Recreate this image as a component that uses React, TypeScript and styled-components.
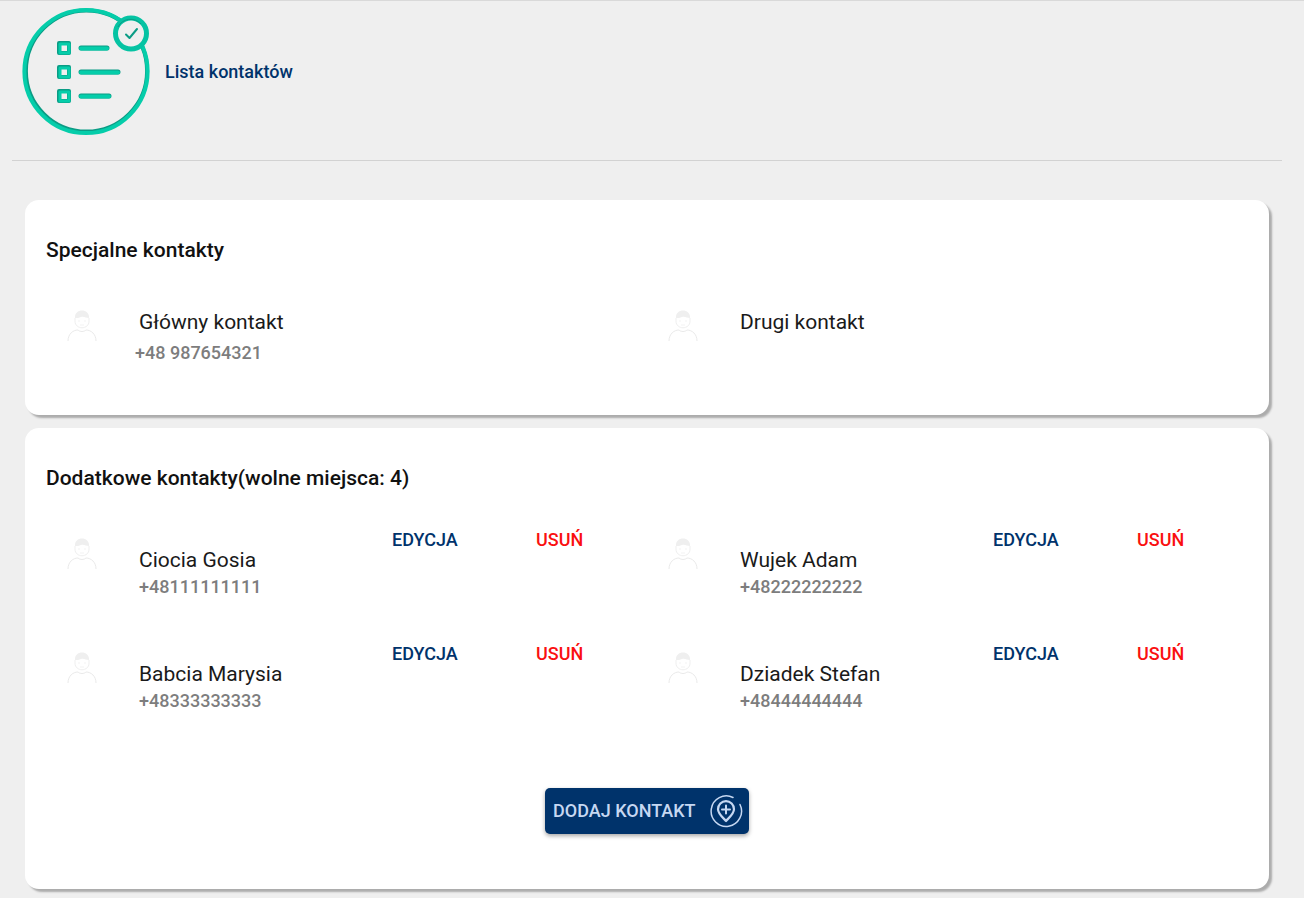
import React from "react";
import styled, { createGlobalStyle } from "styled-components";

const GlobalStyle = createGlobalStyle`
  *, *::before, *::after { box-sizing: border-box; }
  body {
    margin: 0;
    background: #efefef;
    color: #1a1a1a;
    font-family: Roboto, "Liberation Sans", sans-serif;
  }
`;

const navy = "#00336b";

const Page = styled.div`
  border-top: 1px solid #d9d9d9;
`;

const Header = styled.header`
  display: flex;
  align-items: center;
  gap: 14px;
  height: 160px;
  margin: 0 22px 0 12px;
  padding: 0 10px 18px;
  border-bottom: 1px solid #d2d2d2;
`;

const Title = styled.h1`
  margin: 0;
  font-size: 18px;
  line-height: 24px;
  font-weight: 500;
  color: ${navy};
`;

const Main = styled.main`
  display: flex;
  flex-direction: column;
  gap: 13px;
  padding: 39px 35px 8px 25px;
`;

const Card = styled.section<{ $bottom: number }>`
  padding: 36px 21px ${(p) => p.$bottom}px;
  border-radius: 14px;
  background: #fff;
  box-shadow: 3px 3px 2px #acacac;
`;

const CardTitle = styled.h2`
  margin: 0;
  font-size: 21px;
  line-height: 28px;
  font-weight: 500;
  color: #111;
`;

const ContactGrid = styled.ul`
  display: grid;
  grid-template-columns: 1fr 1fr;
  row-gap: 34px;
  margin: 0;
  padding: 36px 0 0;
  list-style: none;
`;

const ContactItem = styled.li`
  display: grid;
  grid-template-columns: 93fr 253fr 144fr 111fr;
  align-items: start;
  min-height: 80px;
`;

const Avatar = styled.svg`
  display: block;
  width: 30px;
  height: 34px;
  margin: 8px 0 0 21px;
`;

const Details = styled.div<{ $special?: boolean }>`
  padding-top: ${(p) => (p.$special ? 8 : 18)}px;
`;

const Name = styled.div`
  font-size: 21px;
  line-height: 28px;
`;

const Phone = styled.div<{ $special?: boolean }>`
  margin: ${(p) => (p.$special ? "4px 0 0 -4px" : "0")};
  font-size: 18px;
  line-height: 26px;
  font-weight: 500;
  color: #7d7d7d;
`;

const TextButton = styled.button<{ $danger?: boolean }>`
  justify-self: start;
  padding: 0;
  border: 0;
  background: none;
  font: 500 18px/24px Roboto, "Liberation Sans", sans-serif;
  color: ${(p) => (p.$danger ? "#fa1010" : navy)};
  cursor: pointer;
`;

const AddButton = styled.button`
  display: flex;
  align-items: center;
  justify-content: space-between;
  width: 204px;
  height: 46px;
  margin: 66px auto 0;
  padding: 0 6px 0 8px;
  border: 0;
  border-radius: 5px;
  background: ${navy};
  box-shadow: 0 2px 4px rgba(0, 0, 0, 0.35);
  font: 500 18px/24px Roboto, "Liberation Sans", sans-serif;
  color: #c6d8f2;
  cursor: pointer;
`;

const ListLogo = () => (
  <svg width="129" height="129" viewBox="0 0 129 129" fill="none" aria-hidden="true">
    <g stroke="#0b9c85" strokeLinecap="round" strokeLinejoin="round">
      <circle cx="64.500" cy="64" r="60.600" strokeWidth="4" />
      {[41, 65, 89].map((y) => (
        <rect key={y} x="37" y={y - 5} width="10" height="10" strokeWidth="4" />
      ))}
      <path d="M59 41H85M59 65H96M59 89H87" strokeWidth="5" />
    </g>
    <g stroke="#05cdaa" strokeLinecap="round" strokeLinejoin="round">
      <circle cx="64" cy="64.500" r="61.600" strokeWidth="4" />
      {[41, 65, 89].map((y) => (
        <rect key={y} x="38" y={y - 4} width="9" height="9" strokeWidth="3" />
      ))}
      <path d="M59 41.500H85M59 65.500H96M59 89.500H87" strokeWidth="4" />
    </g>
    <circle cx="109" cy="26.500" r="15.500" fill="#efefef" stroke="#05c3a3" strokeWidth="5" />
    <path d="M96 20A14 14 0 0 1 119 17" stroke="#0b9c85" strokeWidth="1" />
    <path d="M104 27.500L107.500 31L115 22" stroke="#0b9c85" strokeWidth="2" strokeLinecap="round" strokeLinejoin="round" />
  </svg>
);

const Person = () => (
  <Avatar viewBox="0 0 30 34" fill="none" aria-hidden="true">
    <path d="M8 10C7 0 23 0 22 10C19 10 17 8 14 9C12 10 10 10 8 10Z" fill="#efefef" />
    <path d="M8 10V13C8 22 22 22 22 13V10" stroke="#efefef" />
    <path d="M1 33C1 26 6 22 11 22C13 24 17 24 19 22C24 22 29 26 29 33" stroke="#eaeaea" />
    <path d="M11 13H13M17 13H19M13 17H17" stroke="#f3f3f3" />
  </Avatar>
);

const AddPin = () => (
  <svg width="34" height="34" viewBox="0 0 34 34" fill="none" stroke="#c6d8f2" strokeLinecap="round" strokeLinejoin="round" aria-hidden="true">
    <path d="M31 10.500A15.200 15.200 0 1 1 24 3.500" strokeWidth="1.500" />
    <path d="M17 27C15 24.500 9 20 9 15.200A8 8 0 0 1 25 15.200C25 20 19 24.500 17 27Z" strokeWidth="2.200" />
    <path d="M17 11.500V19.500M13 15.500H21" strokeWidth="2" />
  </svg>
);

interface Contact {
  name: string;
  phone?: string;
}

const specialContacts: Contact[] = [
  { name: "Główny kontakt", phone: "+48 987654321" },
  { name: "Drugi kontakt" },
];

const extraContacts: Contact[] = [
  { name: "Ciocia Gosia", phone: "+48111111111" },
  { name: "Wujek Adam", phone: "+48222222222" },
  { name: "Babcia Marysia", phone: "+48333333333" },
  { name: "Dziadek Stefan", phone: "+48444444444" },
];

const ContactRow = ({ contact, special }: { contact: Contact; special?: boolean }) => (
  <ContactItem>
    <Person />
    <Details $special={special}>
      <Name>{contact.name}</Name>
      {contact.phone && <Phone $special={special}>{contact.phone}</Phone>}
    </Details>
    {!special && (
      <>
        <TextButton type="button">EDYCJA</TextButton>
        <TextButton type="button" $danger>USUŃ</TextButton>
      </>
    )}
  </ContactItem>
);

export default function App() {
  return (
    <>
      <GlobalStyle />
      <Page>
        <Header>
          <ListLogo />
          <Title>Lista kontaktów</Title>
        </Header>
        <Main>
          <Card $bottom={35}>
            <CardTitle>Specjalne kontakty</CardTitle>
            <ContactGrid>
              {specialContacts.map((c) => (
                <ContactRow key={c.name} contact={c} special />
              ))}
            </ContactGrid>
          </Card>
          <Card $bottom={55}>
            <CardTitle>Dodatkowe kontakty(wolne miejsca: 4)</CardTitle>
            <ContactGrid>
              {extraContacts.map((c) => (
                <ContactRow key={c.name} contact={c} />
              ))}
            </ContactGrid>
            <AddButton type="button">
              DODAJ KONTAKT
              <AddPin />
            </AddButton>
          </Card>
        </Main>
      </Page>
    </>
  );
}
